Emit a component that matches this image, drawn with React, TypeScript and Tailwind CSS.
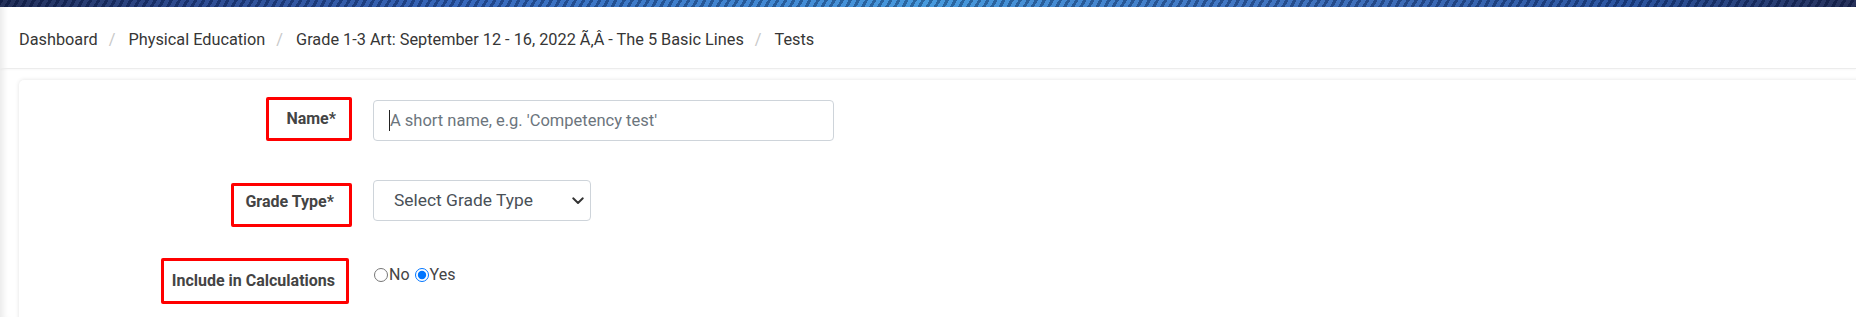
import React from "react";

export default function App() {
  const font = { fontFamily: "Roboto, 'Liberation Sans', sans-serif" };
  return (
    <div className="w-[1856px] h-[317px] overflow-hidden bg-white" style={font}>
      {/* top stripe bar */}
      <div className="h-[7px] w-full bg-[image:repeating-linear-gradient(120deg,rgba(10,20,50,0.35)_0px,rgba(10,20,50,0.35)_3px,rgba(255,255,255,0.06)_3px,rgba(255,255,255,0.06)_7px),linear-gradient(90deg,#17244f_0%,#22418a_10%,#2c5fb8_25%,#3a8ad6_45%,#3d95dc_50%,#3771c2_65%,#3264b4_75%,#1f4a9a_88%,#1b2550_100%)]" />
      <div className="shadow-[inset_8px_0_6px_-5px_rgba(0,0,0,0.09)] h-[310px]">
        {/* breadcrumb */}
        <div className="h-[62px] flex items-center pl-[19px] pt-[5px] border-b border-[#ececec] shadow-[0_1px_2px_rgba(0,0,0,0.03)] text-[16.3px] text-[#363636]">
          <span>Dashboard</span>
          <span className="ml-[11px] mr-[13px] text-[#c8c8c8]">/</span>
          <span>Physical Education</span>
          <span className="ml-[11px] mr-[13px] text-[#c8c8c8]">/</span>
          <span>Grade 1-3 Art: September 12 - 16, 2022 Ã‚Â - The 5 Basic Lines</span>
          <span className="ml-[11px] mr-[13px] text-[#c8c8c8]">/</span>
          <span>Tests</span>
        </div>
        {/* card */}
        <div className="mt-[11px] ml-[19px] mr-[-10px] h-[260px] rounded-[5px] bg-white shadow-[0_0_4px_rgba(0,0,0,0.12)] pt-[17px]">
          {/* Name row */}
          <div className="flex items-start">
            <div className="w-[333px] flex justify-end">
              <div className="w-[86px] h-[44px] border-[3px] border-[#ff0000] rounded-[2px] flex justify-end items-center pr-[13px]">
                <span className="text-[16px] font-bold text-[#444]">Name*</span>
              </div>
            </div>
            <div className="ml-[21px] mt-[3px] relative">
              <input
                type="text"
                placeholder="A short name, e.g. 'Competency test'"
                className="w-[461px] h-[41px] border border-[#ced4da] rounded-[4px] pl-[16px] text-[16.5px] text-[#495057] placeholder:text-[#6c757d] outline-none bg-white"
                style={font}
              />
              <span className="absolute left-[16px] top-[10px] w-[1px] h-[21px] bg-[#222]" />
            </div>
          </div>
          {/* Grade type row */}
          <div className="flex items-start mt-[39px]">
            <div className="w-[333px] flex justify-end">
              <div className="mt-[3px] w-[121px] h-[44px] border-[3px] border-[#ff0000] rounded-[2px] flex justify-end items-start pr-[15px] pt-[5px]">
                <span className="text-[16px] font-bold text-[#444] leading-[21px] whitespace-nowrap">Grade Type*</span>
              </div>
            </div>
            <div className="ml-[21px] relative">
              <select
                className="appearance-none w-[218px] h-[41px] border border-[#ced4da] rounded-[4px] pl-[20px] text-[17.4px] text-[#495057] bg-white outline-none"
                style={font}
                defaultValue=""
              >
                <option value="">Select Grade Type</option>
              </select>
              <svg
                className="absolute right-[7px] top-[17px] pointer-events-none"
                width="12"
                height="8"
                viewBox="0 0 12 8"
                fill="none"
              >
                <path d="M1.2 1.3 L6 6 L10.8 1.3" stroke="#333" strokeWidth="1.9" strokeLinecap="round" strokeLinejoin="round" />
              </svg>
            </div>
          </div>
          {/* Include row */}
          <div className="flex items-start mt-[31px]">
            <div className="w-[333px] flex justify-end">
              <div className="mr-[3px] w-[188px] h-[46px] border-[3px] border-[#ff0000] rounded-[2px] flex justify-end items-center pr-[11px]">
                <span className="text-[16px] font-bold text-[#444] whitespace-nowrap">Include in Calculations</span>
              </div>
            </div>
            <div className="ml-[22px] mt-[7px] h-[19px] flex items-center text-[16px] text-[#444]">
              <input type="radio" name="calc" className="m-0 w-[14px] h-[14px]" />
              <span className="ml-[1px]">No</span>
              <input type="radio" name="calc" defaultChecked className="m-0 ml-[5px] w-[14px] h-[14px]" />
              <span className="ml-[1px]">Yes</span>
            </div>
          </div>
        </div>
      </div>
    </div>
  );
}
